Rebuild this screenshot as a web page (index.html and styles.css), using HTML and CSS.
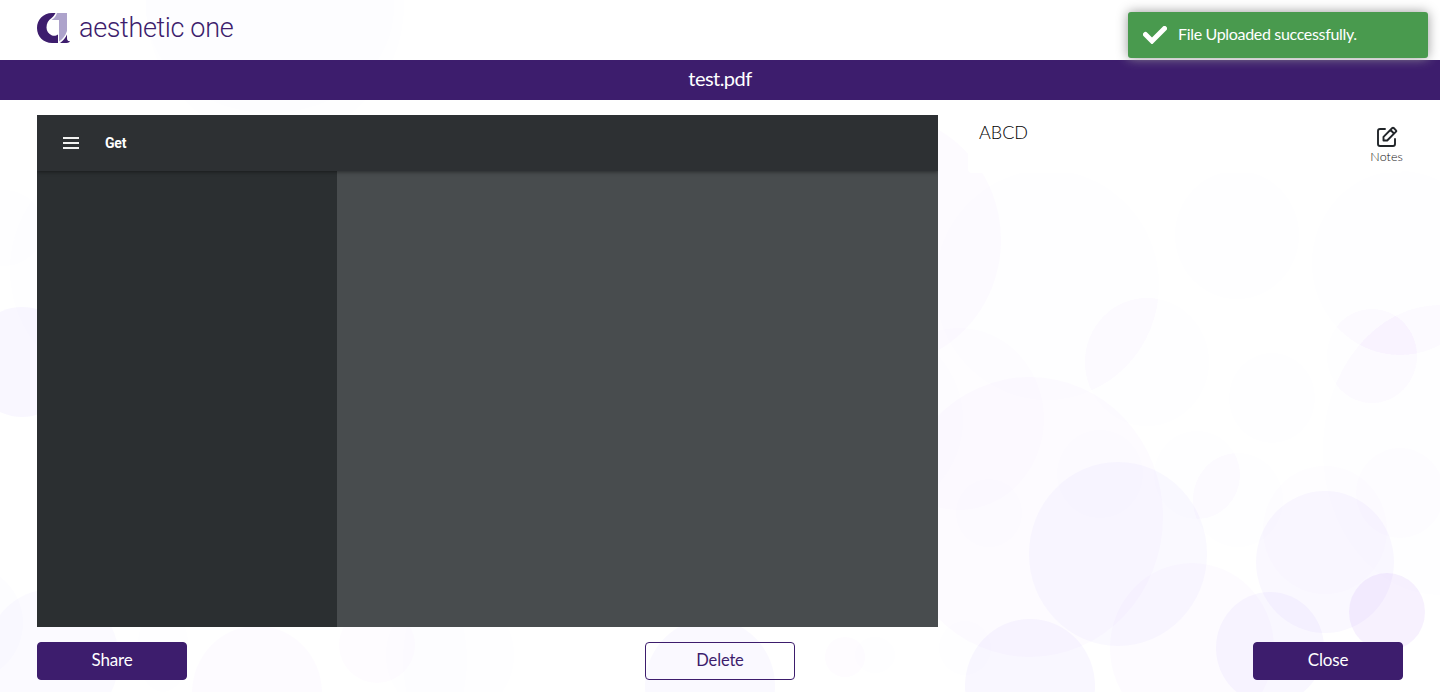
FILE: index.html
```html
<!DOCTYPE html>
<html lang="en">
<head>
<meta charset="utf-8">
<title>aesthetic one</title>
<link rel="stylesheet" href="styles.css">
</head>
<body>
<svg class="bubbles" viewBox="0 0 1440 692" aria-hidden="true">
  <defs>
    <clipPath id="clip-a"><ellipse cx="1047" cy="285" rx="112" ry="115"/></clipPath>
    <clipPath id="clip-b"><ellipse cx="1197" cy="475" rx="43" ry="44"/></clipPath>
    <clipPath id="clip-c"><ellipse cx="1400" cy="263" rx="88" ry="92"/></clipPath>
    <clipPath id="clip-d"><ellipse cx="1440" cy="450" rx="117" ry="145"/></clipPath>
  </defs>
  <g class="bubble-faint">
    <ellipse cx="275" cy="5" rx="129" ry="134"/>
    <ellipse cx="1047" cy="285" rx="112" ry="115"/>
    <ellipse cx="1147" cy="362" rx="62" ry="64"/>
    <ellipse cx="1237" cy="235" rx="62" ry="64"/>
    <ellipse cx="1400" cy="263" rx="88" ry="92"/>
    <ellipse cx="1440" cy="450" rx="117" ry="145"/>
    <ellipse cx="1272" cy="398" rx="43" ry="45"/>
    <ellipse cx="1197" cy="475" rx="43" ry="44"/>
    <ellipse cx="1238" cy="500" rx="45" ry="47"/>
    <ellipse cx="1100" cy="474" rx="43" ry="44"/>
    <ellipse cx="989" cy="513" rx="33" ry="34"/>
    <ellipse cx="965" cy="648" rx="26" ry="27"/>
    <ellipse cx="5" cy="228" rx="38" ry="38"/>
    <ellipse cx="120" cy="270" rx="110" ry="116"/>
    <ellipse cx="435" cy="660" rx="32" ry="70"/>
    <ellipse cx="163" cy="650" rx="26" ry="42"/>
    <ellipse cx="450" cy="655" rx="64" ry="64"/>
    <ellipse cx="875" cy="655" rx="20" ry="18"/>
  </g>
  <g class="bubble-light">
    <ellipse cx="270" cy="8" rx="124" ry="105" opacity=".4"/>
    <ellipse cx="880" cy="240" rx="121" ry="126"/>
    <ellipse cx="959" cy="419" rx="85" ry="91" opacity=".5"/>
    <ellipse cx="880" cy="420" rx="83" ry="90" opacity=".3"/>
    <ellipse cx="1030" cy="517" rx="133" ry="140"/>
    <ellipse cx="1192" cy="648" rx="82" ry="85"/>
    <ellipse cx="1325" cy="530" rx="62" ry="64" opacity=".5"/>
    <ellipse cx="1400" cy="493" rx="44" ry="45" opacity=".5"/>
    <ellipse cx="1372" cy="356" rx="45" ry="47" opacity=".3"/>
    <ellipse cx="257" cy="693" rx="65" ry="67"/>
    <ellipse cx="377" cy="645" rx="38" ry="38" opacity=".7"/>
    <ellipse cx="845" cy="657" rx="20" ry="20" opacity=".7"/>
  </g>
  <g class="bubble-overlap">
    <ellipse cx="1147" cy="362" rx="62" ry="64" clip-path="url(#clip-a)"/>
    <ellipse cx="1238" cy="500" rx="45" ry="47" clip-path="url(#clip-b)"/>
    <ellipse cx="1372" cy="356" rx="45" ry="47" clip-path="url(#clip-c)"/>
    <ellipse cx="1372" cy="356" rx="45" ry="47" clip-path="url(#clip-d)"/>
    <ellipse cx="1400" cy="263" rx="88" ry="92" clip-path="url(#clip-d)"/>
  </g>
  <g class="bubble-mid">
    <ellipse cx="22" cy="362" rx="53" ry="55"/>
    <ellipse cx="52" cy="659" rx="67" ry="70" opacity=".7"/>
    <ellipse cx="-35" cy="623" rx="58" ry="58" opacity=".3"/>
    <ellipse cx="710" cy="686" rx="65" ry="67" opacity=".8"/>
    <ellipse cx="1118" cy="554" rx="89" ry="92" opacity=".8"/>
    <ellipse cx="1325" cy="562" rx="69" ry="71" opacity=".9"/>
    <ellipse cx="1270" cy="648" rx="54" ry="56"/>
    <ellipse cx="1030" cy="686" rx="65" ry="67"/>
  </g>
  <ellipse class="bubble-pink" cx="1387" cy="612" rx="38" ry="39"/>
</svg>

<div class="page">
  <header class="header">
    <svg class="logo-mark" viewBox="0 0 34 32" aria-hidden="true">
      <path class="logo-dark" d="M18.500 1H15C6 1 0 8 0 16C0 24.500 6.500 31 15 31H21V22.500C19 24 17 24 15 23.500C11.500 22 9.500 19 9.500 15.500C9.500 11.500 11.500 8 14 6.500C16 5 17.500 3 18.500 1Z"/>
      <path class="logo-light" d="M20 1H30V19C28.500 23.500 26 27 22 29.500V8H14.500C17.500 6 19 4 20 1Z"/>
      <path class="logo-dark" d="M23 31C26 29 28.500 26 30 22.500V26C30 28.500 31 29.300 33 29C32 31 30 31 28 31Z"/>
    </svg>
    <span class="logo-text">aesthetic one</span>
  </header>

  <div class="title-bar"><span>test.pdf</span></div>

  <main class="content">
    <section class="viewer">
      <div class="viewer-toolbar">
        <svg class="menu-icon" viewBox="0 0 16 12"><path d="M0 1h16M0 6h16M0 11h16"/></svg>
        <span class="viewer-title">Get</span>
      </div>
      <div class="viewer-body">
        <div class="viewer-sidebar"></div>
        <div class="viewer-canvas"></div>
      </div>
    </section>
    <aside class="details">
      <span class="patient">ABCD</span>
      <div class="notes">
        <svg class="notes-icon" viewBox="0 0 22 22"><path d="M9 3H4Q2 3 2 5V18Q2 20 4 20H17Q19 20 19 18V13M7.500 14.500V10.800L16.300 2Q17 1.300 17.700 2L20 4.300Q20.700 5 20 5.700L11.200 14.500ZM14.500 4L18 7.500"/></svg>
        <span class="notes-label">Notes</span>
      </div>
    </aside>
  </main>

  <footer class="actions">
    <button class="btn">Share</button>
    <button class="btn btn-outline">Delete</button>
    <button class="btn">Close</button>
  </footer>
</div>

<div class="toast">
  <svg class="toast-icon" viewBox="0 0 24 18"><path d="M2.500 8.500L9 15L21.500 2.500"/></svg>
  <span class="toast-text">File Uploaded successfully.</span>
</div>
</body>
</html>
```
FILE: styles.css
```css
* { box-sizing: border-box; }

body {
  margin: 0;
  height: 692px;
  overflow: hidden;
  background: #fff;
  font-family: Lato, "Liberation Sans", sans-serif;
  font-weight: 300;
}

.bubbles {
  position: absolute;
  inset: 0;
  width: 1440px;
  height: 692px;
}
.bubble-faint { fill: rgba(120, 70, 200, .006); }
.bubble-light { fill: rgba(160, 75, 255, .022); }
.bubble-overlap { fill: rgba(160, 75, 255, .014); }
.bubble-mid { fill: rgba(110, 60, 250, .04); }
.bubble-pink { fill: rgba(145, 50, 240, .07); }

.page {
  position: relative;
  height: 692px;
  display: flex;
  flex-direction: column;
}

.header {
  height: 60px;
  padding: 0 37px;
  display: flex;
  align-items: flex-start;
}
.logo-mark { width: 34px; height: 32px; margin-top: 12px; }
.logo-dark { fill: #3d1d6d; }
.logo-light { fill: #ada3cb; }
.logo-text {
  margin-left: 8px;
  margin-top: 9px;
  font: 300 27px/38px Roboto, sans-serif;
  letter-spacing: -.35px;
  color: #3d1d6d;
}

.title-bar {
  height: 40px;
  background: #3d1d6d;
  color: #fff;
  font-size: 20px;
  font-weight: 400;
  line-height: 37px;
  letter-spacing: -.55px;
  text-align: center;
}

.content {
  height: 512px;
  margin: 15px 37px 0;
  display: flex;
}

.viewer {
  width: 901px;
  display: flex;
  flex-direction: column;
}
.viewer-toolbar {
  position: relative;
  height: 56px;
  padding-left: 26px;
  display: flex;
  align-items: center;
  background: #2d3033;
  box-shadow: 0 1px 4px rgba(0, 0, 0, .45);
  clip-path: inset(0 0 -6px 0);
}
.menu-icon { width: 16px; height: 12px; stroke: #f1f1f1; stroke-width: 2; }
.viewer-title {
  margin-left: 26px;
  font: 700 14px/20px Roboto, sans-serif;
  letter-spacing: -.2px;
  color: #fff;
}
.viewer-body { flex: 1; display: flex; }
.viewer-sidebar { width: 300px; background: #2b2f31; }
.viewer-canvas { flex: 1; background: #484c4e; }

.details {
  flex: 1;
  height: 58px;
  margin-left: 30px;
  padding-left: 11px;
  display: flex;
  justify-content: space-between;
  border-radius: 4px;
  background: #fff;
  color: #000;
}
.patient { margin-top: 6px; font-size: 18px; line-height: 22px; }
.notes {
  display: flex;
  flex-direction: column;
  align-items: center;
  padding-top: 11px;
}
.notes-icon {
  width: 22px;
  height: 22px;
  fill: none;
  stroke: #212529;
  stroke-width: 1.900;
  stroke-linejoin: round;
  stroke-linecap: round;
}
.notes-label {
  margin-top: 1px;
  font-size: 12.500px;
  line-height: 16px;
  letter-spacing: .1px;
  color: #111;
}

.actions {
  margin: 15px 37px 0;
  display: flex;
  justify-content: space-between;
}
.btn {
  width: 150px;
  height: 38px;
  padding: 0 0 3px;
  border: 1px solid #3d1d6d;
  border-radius: 4px;
  background: #3d1d6d;
  color: #fff;
  font: 400 17px/20px Lato, sans-serif;
  letter-spacing: -.15px;
}
.btn-outline { background: transparent; color: #3d1d6d; font-size: 16.500px; }

.toast {
  position: absolute;
  top: 12px;
  right: 12px;
  width: 300px;
  height: 46px;
  padding-left: 15px;
  display: flex;
  align-items: center;
  gap: 11px;
  border-radius: 3px;
  background: #499a4e;
  box-shadow: 0 0 12px #999;
  color: #fff;
}
.toast-icon {
  width: 24px;
  height: 18px;
  fill: none;
  stroke: #fff;
  stroke-width: 5;
  stroke-linecap: round;
}
.toast-text {
  padding-bottom: 2px;
  font-size: 16px;
  font-weight: 400;
  letter-spacing: -.33px;
  line-height: 20px;
}
```
